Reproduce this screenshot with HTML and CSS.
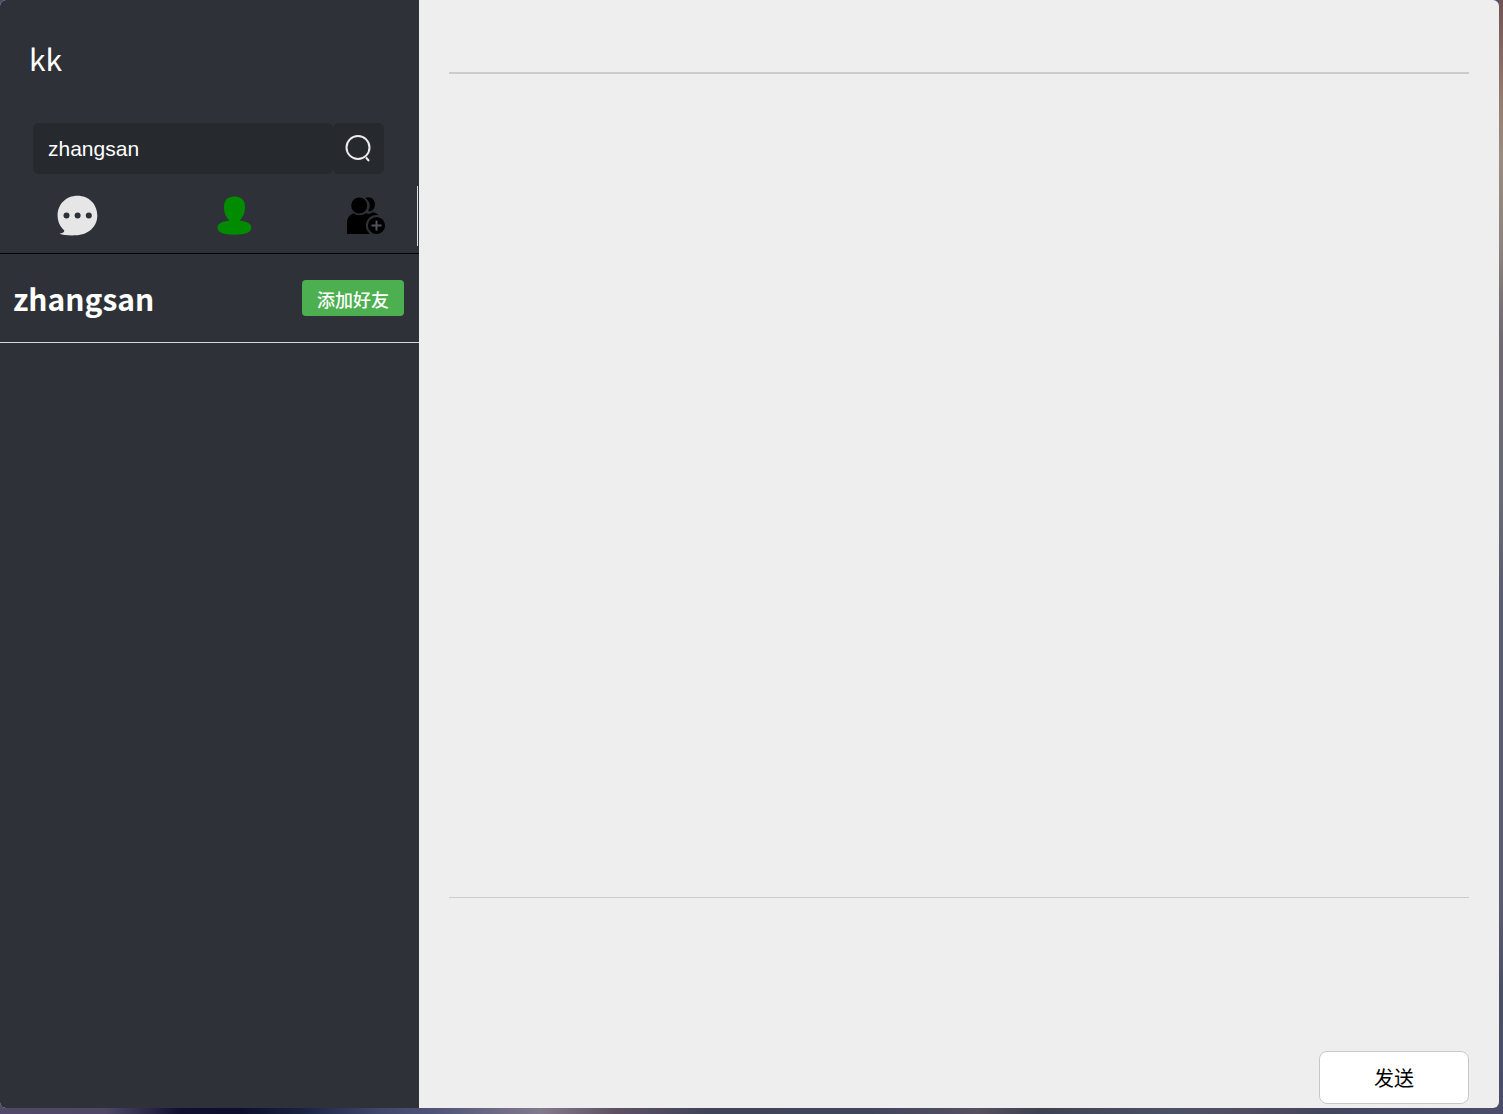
FILE: index.html
```html
<!DOCTYPE html>
<html lang="zh-CN">
<head>
<meta charset="utf-8">
<title>Chat</title>
<link rel="stylesheet" href="styles.css">
</head>
<body>
<main class="chat">
  <aside class="sidebar">
    <header class="profile">kk</header>
    <form class="search">
      <input class="search-input" type="text" value="zhangsan" aria-label="搜索">
      <button class="search-button" type="button" aria-label="搜索">
        <svg width="28" height="28" viewBox="0 0 28 28" fill="none" stroke="#ececec" stroke-width="2"><circle cx="13" cy="12.500" r="11.500"/><path d="M21 22.500l3 3.500"/></svg>
      </button>
    </form>
    <nav class="tabs">
      <button class="tab" type="button" aria-label="聊天">
        <svg width="40" height="40" viewBox="0 0 40 40"><path fill="#e6e6e6" d="M19.500 -.300C31 -.300 39.300 8.300 39.300 19.500S30.500 39 17.500 39.300C11 39.600 5 39 1.500 37.800 4 37.300 6.500 36.300 6.300 34.500 2.500 31 -.400 26 -.400 19.500 -.400 8.300 8-.300 19.500-.300z"/><g fill="#2e3238"><circle cx="8.500" cy="19.500" r="3"/><circle cx="19.600" cy="19.500" r="3"/><circle cx="30.800" cy="19.500" r="3"/></g></svg>
      </button>
      <button class="tab" type="button" aria-label="联系人">
        <svg width="40" height="40" viewBox="0 0 40 40" fill="#008b00"><path d="M20.500 .500C27.500 .500 31 4 31 11.500 31 17 28.500 22 25.500 24.700 32.500 25 37.300 27.500 37.300 31.500 37.300 36.500 31.500 38.700 20.500 38.700S3.500 36.500 3.500 31.500C3.500 27.500 8.500 25 15.500 24.700 12.500 22 10 17 10 11.500 10 4 13.500 .500 20.500 .500z"/></svg>
      </button>
      <button class="tab" type="button" aria-label="添加好友">
        <svg width="40" height="40" viewBox="0 0 40 40"><path d="M20 2c5-2.200 10 .800 10 6.500 0 3.500-2 6-5 7-1-.3-1.500-.8-1.800-1.200C26 10.500 25 5 20 2z"/><path d="M22.500 18.500l5.500-2.200c3.200.5 5.200 2 6.200 4.200-3-.5-5 0-6.700 1.200z"/><path d="M2 38V27c0-5.500 3-8.500 7-10 3.500 3 8.500 3 12 0 2.500.8 4.500 2.300 5.500 4.700-5 4-5.500 11.300-1.500 16.300z"/><circle cx="14.200" cy="9.500" r="8.800" stroke="#2e3238" stroke-width="1.500"/><circle cx="31.500" cy="29.500" r="9.600" stroke="#2e3238" stroke-width="2"/><path d="M31.500 24.500v10M26.500 29.500h10" stroke="#50545a" stroke-width="2"/></svg>
      </button>
    </nav>
    <ul class="people">
      <li class="person">
        <strong class="person-name">zhangsan</strong>
        <button class="add-button" type="button">添加好友</button>
      </li>
    </ul>
  </aside>
  <section class="conversation">
    <header class="conversation-title"></header>
    <div class="messages"></div>
    <form class="composer">
      <textarea class="message-input" aria-label="消息"></textarea>
      <button class="send-button" type="button">发送</button>
    </form>
  </section>
</main>
</body>
</html>
```
FILE: styles.css
```css
* {
  box-sizing: border-box;
}

body {
  margin: 0;
  padding: 0 4px 6px 0;
  min-height: 100vh;
  display: flex;
  font-family: "Noto Sans CJK SC", sans-serif;
  background:
    linear-gradient(#705254 0, #957c70 9%, #9a8c80 14%, #8c8480 22%, #706a72 30%, #686a74 45%, #5a5c70 54%, #5c5c70 81%, #4a4e66 89%, #4a4c68) right / 4px 100% no-repeat,
    linear-gradient(90deg, #504a68 0, #4e4866 7%, #100f30 12%, #0c0e2e 16%, #1a2240 20%, #40456a 25%, #505478 29%, #837a8c 36%, #5d5063 41%, #414458 47%, #41455c 58%, #564f60 65%, #3e4250 69%, #4c5064 78%, #514c60 83%, #42455c 88%, #4a4e6a);
}

.chat {
  flex: 1;
  display: flex;
  overflow: hidden;
  border-radius: 6px;
  background: #eee;
}

.sidebar {
  width: 419px;
  flex-shrink: 0;
  background: #2e3238;
  color: #fff;
}

.profile {
  padding: 34px 29px 41px;
  font-size: 30px;
  line-height: 48px;
}

.search {
  display: flex;
  height: 51px;
  margin: 0 35px 12px 33px;
}

.search-input,
.search-button {
  border: 0;
  border-radius: 6px;
  background: #26292e;
  color: #fff;
}

.search-input {
  flex: 1;
  min-width: 0;
  padding: 0 15px;
  font: 21px "Liberation Sans", Arial, sans-serif;
}

.search-button {
  display: grid;
  place-items: center;
  width: 51px;
  padding: 0;
}

.tabs {
  display: grid;
  grid-template-columns: 156px 156px 1fr;
  height: 68px;
  padding: 0 1px 7px 0;
  border-bottom: 1px solid #000;
}

.tab {
  display: grid;
  place-items: center;
  padding: 0;
  border: 0;
  background: none;
}

.tab svg {
  overflow: visible;
}

.tab:last-child {
  border-right: 1px solid #ddd;
}

.people {
  margin: 0;
  padding: 0;
  list-style: none;
}

.person {
  display: flex;
  align-items: center;
  justify-content: space-between;
  height: 89px;
  padding: 0 15px 0 13px;
  border-bottom: 1px solid #d6d6d6;
}

.person-name {
  font-size: 30px;
  line-height: 48px;
}

.add-button {
  height: 36px;
  padding: 2px 15px 0;
  border: 0;
  border-radius: 4px;
  background: #4caf50;
  color: #fff;
  font: 500 18px "Noto Sans CJK SC", sans-serif;
}

.conversation {
  flex: 1;
  display: flex;
  flex-direction: column;
  padding: 0 30px 4px;
}

.conversation-title {
  height: 74px;
  border-bottom: 2px solid #ccc;
}

.messages {
  flex: 1;
}

.composer {
  display: flex;
  flex-direction: column;
  height: 207px;
  border-top: 1px solid #ccc;
}

.message-input {
  flex: 1;
  border: 0;
  background: none;
  resize: none;
  font: inherit;
}

.send-button {
  align-self: flex-end;
  width: 150px;
  height: 53px;
  border: 1px solid #c8c8c8;
  border-radius: 8px;
  background: #fff;
  color: #000;
  font: 20px "Noto Sans CJK SC", sans-serif;
}
```
